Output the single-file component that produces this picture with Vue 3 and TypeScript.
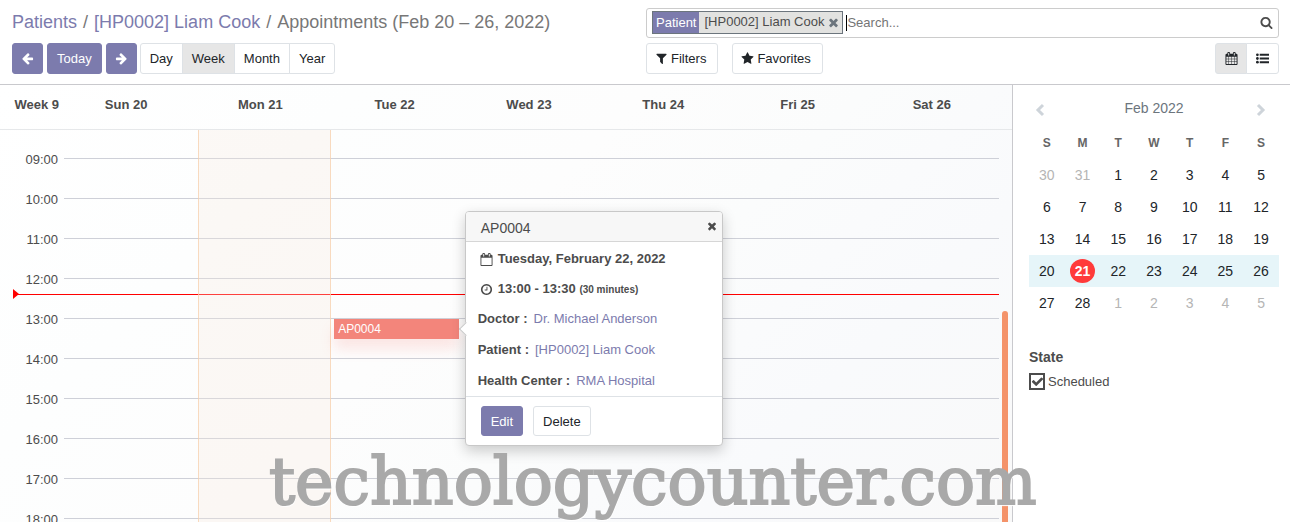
<script setup lang="ts">
import { ref } from 'vue'

interface MiniDay { n: number; other: boolean }

const icons = {
  arrowLeft: 'M1664 896v128q0 53-32.5 90.5t-84.5 37.5h-704l293 294q38 36 38 90t-38 90l-75 76q-37 37-90 37-52 0-91-37l-651-652q-37-37-37-90 0-52 37-91l651-650q38-38 91-38 52 0 90 38l75 74q38 38 38 91t-38 91l-293 293h704q52 0 84.5 37.5t32.5 90.5z',
  arrowRight: 'M1600 960q0 54-37 91l-651 651q-39 37-91 37-51 0-90-37l-75-75q-38-38-38-91t38-91l293-293h-704q-52 0-84.5-37.5t-32.5-90.5v-128q0-53 32.5-90.5t84.5-37.5h704l-293-294q-38-36-38-90t38-90l75-75q38-38 90-38 53 0 91 38l651 651q37 35 37 90z',
  filter: 'M1595 295q17 41-14 70l-493 493v742q0 42-39 59-13 5-25 5-27 0-45-19l-256-256q-19-19-19-45v-486l-493-493q-31-29-14-70 17-39 59-39h1280q42 0 59 39z',
  star: 'M1728 647q0 22-26 48l-363 354 86 500q1 7 1 20 0 21-10.5 35.5t-30.5 14.5q-19 0-40-12l-449-236-449 236q-22 12-40 12-21 0-31.5-14.5t-10.5-35.5q0-6 2-20l86-500-364-354q-25-27-25-48 0-37 56-46l502-73 225-455q19-41 49-41t49 41l225 455 502 73q56 9 56 46z',
  search: 'M1216 832q0-185-131.5-316.5t-316.5-131.5-316.5 131.5-131.5 316.5 131.5 316.5 316.5 131.5 316.5-131.5 131.5-316.5zm512 832q0 52-38 90t-90 38q-54 0-90-38l-343-342q-179 124-399 124-143 0-273.5-55.5t-225-150-150-225-55.5-273.5 55.5-273.5 150-225 225-150 273.5-55.5 273.5 55.5 225 150 150 225 55.5 273.5q0 220-124 399l343 343q37 37 37 90z',
  times: 'M1490 1322q0 40-28 68l-136 136q-28 28-68 28t-68-28l-294-294-294 294q-28 28-68 28t-68-28l-136-136q-28-28-28-68t28-68l294-294-294-294q-28-28-28-68t28-68l136-136q28-28 68-28t68 28l294 294 294-294q28-28 68-28t68 28l136 136q28 28 28 68t-28 68l-294 294 294 294q28 28 28 68z',
  calendar: 'M192 1664h288v-288h-288v288zm352 0h320v-288h-320v288zm-352-352h288v-320h-288v320zm352 0h320v-320h-320v320zm-352-384h288v-288h-288v288zm736 736h320v-288h-320v288zm-384-736h320v-288h-320v288zm768 736h288v-288h-288v288zm-384-352h320v-320h-320v320zm-352-864v-288q0-13-9.5-22.5t-22.5-9.5h-64q-13 0-22.5 9.5t-9.5 22.5v288q0 13 9.5 22.5t22.5 9.5h64q13 0 22.5-9.5t9.5-22.5zm736 864h288v-320h-288v320zm-384-384h320v-288h-320v288zm384 0h288v-288h-288v288zm32-480v-288q0-13-9.5-22.5t-22.5-9.5h-64q-13 0-22.5 9.5t-9.5 22.5v288q0 13 9.5 22.5t22.5 9.5h64q13 0 22.5-9.5t9.5-22.5zm384-64v1280q0 52-38 90t-90 38h-1408q-52 0-90-38t-38-90v-1280q0-52 38-90t90-38h128v-96q0-66 47-113t113-47h64q66 0 113 47t47 113v96h384v-96q0-66 47-113t113-47h64q66 0 113 47t47 113v96h128q52 0 90 38t38 90z',
  calendarO: 'M192 1664h1408v-1024h-1408v1024zm384-1216v-288q0-14-9-23t-23-9h-64q-14 0-23 9t-9 23v288q0 14 9 23t23 9h64q14 0 23-9t9-23zm768 0v-288q0-14-9-23t-23-9h-64q-14 0-23 9t-9 23v288q0 14 9 23t23 9h64q14 0 23-9t9-23zm384-64v1280q0 52-38 90t-90 38h-1408q-52 0-90-38t-38-90v-1280q0-52 38-90t90-38h128v-96q0-66 47-113t113-47h64q66 0 113 47t47 113v96h384v-96q0-66 47-113t113-47h64q66 0 113 47t47 113v96h128q52 0 90 38t38 90z',
  clock: 'M1024 544v448q0 14-9 23t-23 9h-320q-14 0-23-9t-9-23v-64q0-14 9-23t23-9h224v-352q0-14 9-23t23-9h64q14 0 23 9t9 23zm416 352q0-148-73-273t-198-198-273-73-273 73-198 198-73 273 73 273 198 198 273 73 273-73 198-198 73-273zm224 0q0 209-103 385.5t-279.5 279.5-385.5 103-385.5-103-279.5-279.5-103-385.5 103-385.5 279.5-279.5 385.5-103 385.5 103 279.5 279.5 103 385.5z',
  check: 'M1671 566q0 40-28 68l-724 724-136 136q-28 28-68 28t-68-28l-136-136-362-362q-28-28-28-68t28-68l136-136q28-28 68-28t68 28l294 295 656-657q28-28 68-28t68 28l136 136q28 28 28 68z',
}

const scales = ['Day', 'Week', 'Month', 'Year']
const scale = ref('Week')
const days = ['Sun 20', 'Mon 21', 'Tue 22', 'Wed 23', 'Thu 24', 'Fri 25', 'Sat 26']
const hours = ['09:00', '10:00', '11:00', '12:00', '13:00', '14:00', '15:00', '16:00', '17:00', '18:00']
const details = [
  { label: 'Doctor :', value: 'Dr. Michael Anderson' },
  { label: 'Patient :', value: '[HP0002] Liam Cook' },
  { label: 'Health Center :', value: 'RMA Hospital' },
]
const weekdays = ['S', 'M', 'T', 'W', 'T', 'F', 'S']
const cells: MiniDay[] = Array.from({ length: 35 }, (_, i) => {
  const d = i - 1
  if (d < 1) return { n: d + 31, other: true }
  return d > 28 ? { n: d - 28, other: true } : { n: d, other: false }
})
const weeks = [0, 1, 2, 3, 4].map((w) => cells.slice(w * 7, w * 7 + 7))
const query = ref('')
const scheduled = ref(true)
</script>

<template>
  <div class="app">
    <header class="panel">
      <nav class="crumbs" aria-label="Breadcrumb">
        <a href="#">Patients</a><span>/</span><a href="#">[HP0002] Liam Cook</a><span>/</span>
        <span class="current">Appointments (Feb 20 – 26, 2022)</span>
      </nav>
      <div class="searchbox">
        <div class="facet">
          <span class="facet-name">Patient</span>
          <span class="facet-value">[HP0002] Liam Cook</span>
          <button class="bare facet-x" aria-label="Remove">
            <svg viewBox="0 0 1792 1792"><path :d="icons.times" /></svg>
          </button>
        </div>
        <input v-model="query" type="text" placeholder="Search..." aria-label="Search" />
        <button class="bare run" aria-label="Run search">
          <svg viewBox="0 0 1792 1792"><path :d="icons.search" /></svg>
        </button>
      </div>
      <div class="tools">
        <button class="btn primary icon-btn" aria-label="Previous"><svg viewBox="0 0 1792 1792"><path :d="icons.arrowLeft" /></svg></button>
        <button class="btn primary">Today</button>
        <button class="btn primary icon-btn" aria-label="Next"><svg viewBox="0 0 1792 1792"><path :d="icons.arrowRight" /></svg></button>
        <div class="group">
          <button v-for="s in scales" :key="s" class="btn" :class="{ active: s === scale }" @click="scale = s">{{ s }}</button>
        </div>
      </div>
      <div class="tools filters">
        <button class="btn"><svg viewBox="0 0 1792 1792"><path :d="icons.filter" /></svg>Filters</button>
        <button class="btn"><svg viewBox="0 0 1792 1792"><path :d="icons.star" /></svg>Favorites</button>
        <div class="group views">
          <button class="btn active" aria-label="Calendar"><svg viewBox="0 0 1792 1792"><path :d="icons.calendar" /></svg></button>
          <button class="btn" aria-label="List">
            <svg viewBox="0 0 1792 1792">
              <circle cx="192" cy="384" r="190" /><circle cx="192" cy="896" r="190" /><circle cx="192" cy="1408" r="190" />
              <path d="M512 256h1280v256H512zM512 768h1280v256H512zM512 1280h1280v256H512z" />
            </svg>
          </button>
        </div>
      </div>
    </header>

    <div class="content">
      <main class="calendar">
        <div class="day-heads">
          <div class="week-no">Week 9</div>
          <div v-for="d in days" :key="d" class="day-head">{{ d }}</div>
        </div>
        <div class="board">
          <div class="slots">
            <div v-for="h in hours" :key="h" class="slot">
              <span class="hour">{{ h }}</span><span class="rule"></span>
            </div>
            <div class="columns">
              <div v-for="(d, i) in days" :key="d" class="column" :class="{ today: i === 1 }">
                <template v-if="i === 2">
                  <div class="event">AP0004</div>
                  <section class="popover" aria-label="AP0004">
                    <div class="pop-head">
                      <span>AP0004</span>
                      <button class="bare" aria-label="Close"><svg viewBox="0 0 1792 1792"><path :d="icons.times" /></svg></button>
                    </div>
                    <ul class="when">
                      <li><svg viewBox="0 0 1792 1792"><path :d="icons.calendarO" /></svg><span>Tuesday, February 22, 2022</span></li>
                      <li><svg viewBox="0 0 1792 1792"><path :d="icons.clock" /></svg><span>13:00 - 13:30 <small>(30 minutes)</small></span></li>
                    </ul>
                    <ul class="details">
                      <li v-for="f in details" :key="f.label"><b>{{ f.label }}</b><a href="#">{{ f.value }}</a></li>
                    </ul>
                    <div class="pop-foot">
                      <button class="btn primary">Edit</button>
                      <button class="btn">Delete</button>
                    </div>
                  </section>
                </template>
              </div>
            </div>
            <div class="now"></div>
          </div>
          <div class="scroller"><div class="thumb"></div></div>
        </div>
      </main>

      <aside class="side">
        <div class="month">
          <button class="bare" aria-label="Previous month"><svg viewBox="0 0 14 14"><path d="M10 2 5 7l5 5" /></svg></button>
          <span>Feb 2022</span>
          <button class="bare" aria-label="Next month"><svg viewBox="0 0 14 14"><path d="m4 2 5 5-5 5" /></svg></button>
        </div>
        <table class="mini">
          <thead>
            <tr><th v-for="(w, i) in weekdays" :key="i">{{ w }}</th></tr>
          </thead>
          <tbody>
            <tr v-for="(week, wi) in weeks" :key="wi" :class="{ selected: wi === 3 }">
              <td v-for="(c, ci) in week" :key="ci" :class="{ other: c.other }">
                <span :class="{ dot: c.n === 21 }">{{ c.n }}</span>
              </td>
            </tr>
          </tbody>
        </table>
        <h2>State</h2>
        <label class="check">
          <span class="box">
            <input v-model="scheduled" type="checkbox" />
            <svg v-if="scheduled" viewBox="0 0 1792 1792"><path :d="icons.check" /></svg>
          </span>
          Scheduled
        </label>
      </aside>
    </div>
    <div class="watermark">technologycounter.com</div>
  </div>
</template>

<style>
body { margin: 0; }
</style>

<style scoped>
* { box-sizing: border-box; }
.app {
  position: relative;
  display: flex;
  flex-direction: column;
  height: 100vh;
  overflow: hidden;
  background: #fff;
  color: #4c4c4c;
  font: 13px/20px "Liberation Sans", Arial, sans-serif;
}
svg { width: 13px; height: 13px; fill: currentColor; flex: none; display: block; }
a { color: #7c7bad; text-decoration: none; }
button, input { font: inherit; }
ul { list-style: none; margin: 0; padding: 0; }
.bare { display: flex; border: 0; padding: 0; background: none; color: inherit; }

.panel {
  display: grid;
  grid-template-columns: 1fr 1fr;
  grid-template-rows: 30px 31px;
  gap: 5px 1px;
  padding: 8px 11px 10px 12px;
  border-bottom: 1px solid #c9c9cd;
}
.crumbs { display: flex; gap: 6px; font-size: 18px; line-height: 28px; color: #777; white-space: nowrap; }
.searchbox {
  display: flex;
  align-items: center;
  border: 1px solid #ccc;
  border-radius: 3px;
  padding: 0 5px;
}
.facet {
  display: flex;
  align-items: center;
  height: 23px;
  margin-bottom: 1px;
  border: 1px solid #6c757d;
  background: #e2e2e0;
  white-space: nowrap;
}
.facet-name { padding: 0 3px; line-height: 21px; background: #7c7bad; color: #fff; }
.facet-value { padding: 0 3px 2px 5px; }
.facet-x { color: #6c757d; padding-right: 2px; }
.searchbox input {
  flex: 1;
  min-width: 0;
  height: 16px;
  margin-left: 3px;
  border: 0;
  border-left: 1px solid #000;
  padding: 0;
  outline: 0;
  background: none;
}
.searchbox input::placeholder { color: #757575; opacity: 1; }
.run { padding-bottom: 2px; }

.tools { display: flex; gap: 4px; }
.btn {
  display: inline-flex;
  align-items: center;
  justify-content: center;
  gap: 3px;
  border: 1px solid #dee2e6;
  border-radius: 3px;
  padding: 0 9px;
  background: #fff;
  color: #212529;
}
.primary { background: #7c7bad; border-color: #7c7bad; color: #fff; }
.icon-btn { width: 31px; padding: 0; }
.icon-btn + .group { margin-left: -1px; }
.active { background: #e6e6e6; }
.group { display: flex; }
.group .btn + .btn { margin-left: -1px; }
.group .btn:not(:first-child) { border-top-left-radius: 0; border-bottom-left-radius: 0; }
.group .btn:not(:last-child) { border-top-right-radius: 0; border-bottom-right-radius: 0; }
.filters { gap: 14px; }
.filters > .btn { gap: 3px; padding: 0 11px 0 8px; }
.views { margin-left: auto; }
.views .btn { width: 32px; padding: 0; }
.views .btn + .btn { width: 33px; }

.content { display: flex; flex: 1; min-height: 0; }
.calendar {
  flex: 1;
  min-width: 0;
  display: flex;
  flex-direction: column;
  background: linear-gradient(135deg, #fff 0%, #fdfefe 25%, #fdfdfd 45%, #fbfcfc 60%, #f9fafc 78%, #f9f9f9 100%);
}
.day-heads {
  display: grid;
  grid-template-columns: 59px repeat(7, 1fr);
  height: 45px;
  padding-right: 13px;
  border-bottom: 1px solid #e6e8ea;
  font-weight: bold;
  line-height: 40px;
  text-align: center;
}
.week-no { text-align: right; }
.board { display: flex; flex: 1; min-height: 0; }
.slots { position: relative; flex: 1; padding-top: 9px; overflow: hidden; }
.slot { display: grid; grid-template-columns: 64px 1fr; height: 40px; line-height: 42px; }
.hour { text-align: right; padding-right: 6px; }
.rule { height: 20px; border-bottom: 1px solid #ced0d8; }
.columns {
  position: absolute;
  inset: 0 0 0 64px;
  z-index: 2;
  display: grid;
  grid-template-columns: repeat(7, 1fr);
}
.column { position: relative; }
.today {
  border: solid rgba(247, 205, 168, 0.7);
  border-width: 0 1px;
  background: rgba(248, 232, 222, 0.28);
}
.event {
  position: absolute;
  top: 189px;
  left: 3px;
  right: 6px;
  height: 20px;
  padding-left: 4px;
  background: #f3857b;
  color: #fff;
  font-size: 12px;
  box-shadow: 0 10px 14px rgba(243, 133, 123, 0.2);
}
.now {
  position: absolute;
  top: 164px;
  left: 13px;
  right: 0;
  z-index: 1;
  border-top: 1px solid #f00;
}
.now::before {
  content: "";
  position: absolute;
  top: -6px;
  left: 0;
  border: solid transparent;
  border-width: 5px 0 5px 6px;
  border-left-color: #f00;
}
.scroller { width: 13px; padding: 181px 4px 0 3px; display: flex; }
.thumb { flex: 1; border-radius: 3px 3px 0 0; background: #f4936a; }

.popover {
  position: absolute;
  top: 81px;
  left: 100%;
  width: 258px;
  border: 1px solid #c8c8c8;
  border-radius: 4px;
  background: #fff;
  box-shadow: 0 5px 14px rgba(0, 0, 0, 0.2);
}
.popover::before {
  content: "";
  position: absolute;
  top: 112px;
  left: -5px;
  width: 9px;
  height: 9px;
  border: solid #c8c8c8;
  border-width: 0 0 1px 1px;
  background: #fff;
  transform: rotate(45deg);
}
.pop-head {
  display: flex;
  justify-content: space-between;
  height: 30px;
  padding: 0 4px 0 15px;
  border-bottom: 1px solid #d6d6d6;
  border-radius: 3px 3px 0 0;
  background: #f7f7f7;
  font-size: 14px;
  line-height: 32px;
}
.pop-head svg { width: 12px; height: 12px; margin-top: 8px; }
.when { padding: 2px 12px 0 14px; }
.when li { display: flex; align-items: center; gap: 5px; height: 30px; font-weight: bold; }
.when small { font-size: 10px; }
.details { padding: 0 12px; }
.details li { display: flex; gap: 6px; line-height: 30px; }
.details li + li { padding-top: 1px; }
.pop-foot { display: flex; gap: 10px; padding: 9px 15px; border-top: 1px solid #dee2e6; }
.pop-foot .btn { height: 30px; padding-top: 1px; }

.side { width: 278px; border-left: 1px solid #c9c9cd; padding: 0 11px 0 16px; }
.month {
  display: flex;
  align-items: center;
  justify-content: space-between;
  height: 43px;
  padding: 2px 11px 0 4px;
  font-size: 14px;
  color: #6c757d;
}
.month span { padding-left: 7px; }
.month svg { width: 14px; height: 14px; fill: none; stroke: #ced4da; stroke-width: 3; margin-top: 4px; }
.mini { width: 100%; table-layout: fixed; border-collapse: collapse; color: #212529; font-size: 14px; }
.mini th, .mini td { height: 32px; padding: 0; text-align: center; }
.mini th { color: #666; font-size: 12px; height: 31px; padding-bottom: 2px; }
.mini .other { color: #b5b5b5; }
.selected { background: #e6f5f9; }
.dot {
  display: block;
  width: 25px;
  margin: 0 auto;
  border-radius: 50%;
  background: #ff3a3a;
  color: #fff;
  font-weight: bold;
  line-height: 24px;
}
h2 { margin: 28px 0 4px; font-size: 14px; line-height: 20px; }
.check { display: inline-flex; align-items: center; gap: 3px; line-height: 21px; }
.box { display: grid; place-items: center; width: 16px; height: 17px; }
.box > * { grid-area: 1 / 1; }
.box input { appearance: none; width: 100%; height: 100%; margin: 0; border: 2px solid #4c4c4c; background: #fff; }

.watermark {
  position: absolute;
  left: 269px;
  bottom: 0;
  z-index: 5;
  pointer-events: none;
  color: #a9a9a9;
  font: 65px/80px "DejaVu Serif", "Liberation Serif", serif;
  -webkit-text-stroke: 2px #a9a9a9;
  text-shadow: 1px 2px 1px #fff;
}
</style>
